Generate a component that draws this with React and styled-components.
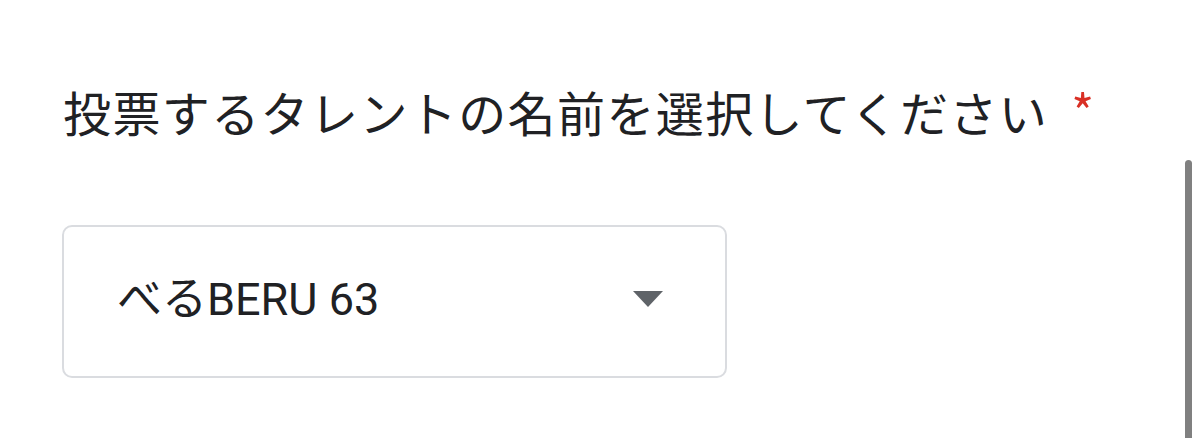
import React from "react";
import styled, { createGlobalStyle } from "styled-components";

const GlobalStyle = createGlobalStyle`
  html, body {
    margin: 0;
    padding: 0;
    background: #ffffff;
  }
  body {
    width: 1200px;
    height: 438px;
    overflow: hidden;
  }
`;

const Page = styled.div`
  position: relative;
  box-sizing: border-box;
  width: 1200px;
  height: 438px;
  overflow: hidden;
  padding: 79px 0 0 62px;
  background: #ffffff;
`;

const Question = styled.div`
  display: flex;
  flex-direction: column;
  gap: 82px;
`;

const Title = styled.div`
  display: flex;
  align-items: flex-start;
  gap: 23px;
  padding-left: 1px;
  font-family: "Noto Sans CJK JP", "Noto Sans", sans-serif;
  font-size: 48px;
  line-height: 64px;
  letter-spacing: 1.4px;
  color: #202124;
`;

const Required = styled.span`
  color: #d93025;
  font-family: "Noto Sans CJK JP", "Noto Sans", sans-serif;
  font-size: 49px;
  line-height: 62px;
`;

const SelectBox = styled.div`
  box-sizing: border-box;
  width: 665px;
  height: 153px;
  display: flex;
  align-items: center;
  justify-content: space-between;
  padding: 0 62px 0 53px;
  border: 2px solid #dadce0;
  border-radius: 10px;
  background: #ffffff;
`;

const SelectValue = styled.span`
  font-family: Roboto, "Noto Sans CJK JP", sans-serif;
  font-size: 45px;
  line-height: 1;
  color: #202124;
  margin-top: -4px;
`;

const Arrow = styled.span`
  width: 0;
  height: 0;
  border-left: 15px solid transparent;
  border-right: 15px solid transparent;
  border-top: 16px solid #5f6368;
  margin-top: -6px;
`;

const ScrollThumb = styled.div`
  position: absolute;
  right: 8px;
  top: 160px;
  bottom: 0;
  width: 7px;
  border-radius: 4px 4px 0 0;
  background: #808080;
`;

export default function App() {
  return (
    <>
      <GlobalStyle />
      <Page>
        <Question>
          <Title>
            <span>投票するタレントの名前を選択してください</span>
            <Required>*</Required>
          </Title>
          <SelectBox>
            <SelectValue>べるBERU 63</SelectValue>
            <Arrow />
          </SelectBox>
        </Question>
        <ScrollThumb />
      </Page>
    </>
  );
}
